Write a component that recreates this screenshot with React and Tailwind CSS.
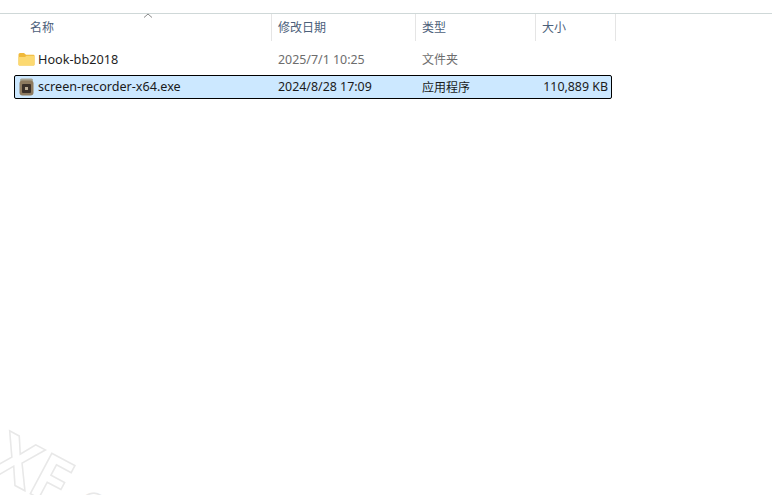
const font = "font-['Noto_Sans','Noto_Sans_CJK_SC',sans-serif]"

function FolderIcon() {
  return (
    <svg width="17" height="14" viewBox="0 0 17 14" className="mb-[2px] shrink-0">
      <path d="M0.5 2.5 Q0.5 1 2 1 H6 L8 2.8 H15.5 Q16.5 2.8 16.5 4 V12.5 Q16.5 13.5 15.5 13.5 H1.5 Q0.5 13.5 0.5 12.5 Z" fill="#f0b93a" />
      <path d="M0.5 5 H7 L8.5 3.8 H16.5 V12.5 Q16.5 13.5 15.5 13.5 H1.5 Q0.5 13.5 0.5 12.5 Z" fill="#fcd971" />
    </svg>
  )
}

function ExeIcon() {
  return (
    <svg width="15" height="18" viewBox="0 0 15 18" className="shrink-0">
      <rect x="1" y="0.5" width="13" height="3" rx="1.5" fill="#a8a391" />
      <rect x="0.5" y="2.5" width="14" height="15" rx="3" fill="#8d7a5f" />
      <rect x="3" y="6" width="9" height="9" rx="1" fill="#3a3029" />
      <rect x="6" y="9" width="3" height="3" fill="#b9aa92" />
    </svg>
  )
}

function HeaderCell({ width, children, pad = 'pl-[6px]' }) {
  return (
    <div style={{ width }} className={`h-[27px] shrink-0 border-r border-[#e5e5e5] ${pad} pt-[5px] text-[12px] leading-[18px] text-[#4c607a]`}>
      {children}
    </div>
  )
}

export default function App() {
  return (
    <div className={`relative h-[495px] w-[772px] overflow-hidden bg-white ${font}`}>
      <div className="h-[13px]" />
      <div className="flex border-t border-[#cfd8d8] pl-[23px]">
        <HeaderCell width={249} pad="pl-[7px]">名称</HeaderCell>
        <HeaderCell width={144}>修改日期</HeaderCell>
        <HeaderCell width={120}>类型</HeaderCell>
        <HeaderCell width={80}>大小</HeaderCell>
      </div>
      <svg width="10" height="5" viewBox="0 0 10 5" className="absolute left-[143px] top-[13px]">
        <path d="M1 4.5 L5 1 L9 4.5" fill="none" stroke="#8a8a8a" />
      </svg>

      <div className="mt-[8px] flex h-[22px] items-center pl-[18px] text-[12px] text-[#6d6d6d]">
        <div className="flex w-[254px] items-center gap-[3px] text-[12.7px] text-[#1f1f1f]">
          <FolderIcon />
          <span>Hook-bb2018</span>
        </div>
        <span className="w-[144px] pl-[6px] text-[12.4px]">2025/7/1 10:25</span>
        <span className="pl-[6px]">文件夹</span>
      </div>

      <div className="ml-[14px] mt-[4px] flex h-[24px] w-[598px] items-center rounded-[2px] border border-black bg-[#cce8ff] pl-[4px] pt-[1px] text-[12px] text-[#1a1a1a]">
        <div className="flex w-[253px] items-center gap-[4px] text-[12.6px]">
          <ExeIcon />
          <span>screen-recorder-x64.exe</span>
        </div>
        <span className="w-[144px] pl-[6px] text-[12.4px]">2024/8/28 17:09</span>
        <span className="w-[120px] pl-[6px]">应用程序</span>
        <span className="w-[72px] text-right text-[12.4px]">110,889 KB</span>
      </div>

      <div className="absolute left-[-6px] top-[436px] rotate-[28deg] text-[64px] font-bold leading-none text-transparent [-webkit-text-stroke:1.5px_#e8e8e8]">
        XF
      </div>
      <div className="absolute left-[78px] top-[486px] rotate-[28deg] text-[40px] font-bold leading-none text-transparent [-webkit-text-stroke:1.5px_#e8e8e8]">
        C
      </div>
    </div>
  )
}
